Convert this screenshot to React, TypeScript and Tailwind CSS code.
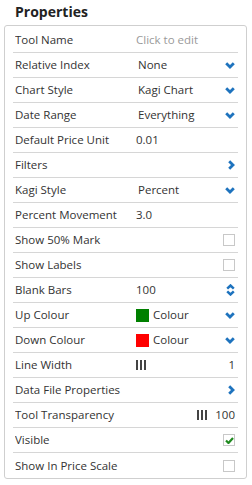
import React from "react";

type Row = {
  label: string;
  kind: "text" | "select" | "link" | "check" | "spin" | "colour" | "bars" | "barsRight";
  value?: string;
  muted?: boolean;
  checked?: boolean;
  swatch?: string;
};

const rows: Row[] = [
  { label: "Tool Name", kind: "text", value: "Click to edit", muted: true },
  { label: "Relative Index", kind: "select", value: "None" },
  { label: "Chart Style", kind: "select", value: "Kagi Chart" },
  { label: "Date Range", kind: "select", value: "Everything" },
  { label: "Default Price Unit", kind: "text", value: "0.01" },
  { label: "Filters", kind: "link" },
  { label: "Kagi Style", kind: "select", value: "Percent" },
  { label: "Percent Movement", kind: "text", value: "3.0" },
  { label: "Show 50% Mark", kind: "check" },
  { label: "Show Labels", kind: "check" },
  { label: "Blank Bars", kind: "spin", value: "100" },
  { label: "Up Colour", kind: "colour", value: "Colour", swatch: "bg-[#008000]" },
  { label: "Down Colour", kind: "colour", value: "Colour", swatch: "bg-[#ff0000]" },
  { label: "Line Width", kind: "bars", value: "1" },
  { label: "Data File Properties", kind: "link" },
  { label: "Tool Transparency", kind: "barsRight", value: "100" },
  { label: "Visible", kind: "check", checked: true },
  { label: "Show In Price Scale", kind: "check" },
];

function ChevronDown() {
  return (
    <svg width="10" height="7" viewBox="0 0 10 7" className="shrink-0">
      <path d="M1.2 1.2 L5 5 L8.8 1.2" fill="none" stroke="#1e73be" strokeWidth="2.8" />
    </svg>
  );
}

function ChevronRight() {
  return (
    <svg width="7" height="10" viewBox="0 0 7 10" className="shrink-0">
      <path d="M1.2 1.2 L5 5 L1.2 8.8" fill="none" stroke="#1e73be" strokeWidth="2.8" />
    </svg>
  );
}

function UpDown() {
  return (
    <svg width="9" height="12" viewBox="0 0 9 12" className="shrink-0">
      <path d="M1.2 4.6 L4.5 1.5 L7.8 4.6" fill="none" stroke="#1e73be" strokeWidth="2.5" />
      <path d="M1.2 7.4 L4.5 10.5 L7.8 7.4" fill="none" stroke="#1e73be" strokeWidth="2.5" />
    </svg>
  );
}

function Bars() {
  return (
    <div className="flex gap-[2px] h-[10px]">
      <div className="w-[2px] bg-[#444]" />
      <div className="w-[2px] bg-[#444]" />
      <div className="w-[2px] bg-[#444]" />
    </div>
  );
}

function CheckBox({ checked }: { checked?: boolean }) {
  return (
    <div className="w-[12px] h-[12px] border border-[#c8c8c8] bg-white flex items-center justify-center">
      {checked && (
        <svg width="9" height="7" viewBox="0 0 9 7">
          <path d="M1 3.5 L3.5 6 L8 1" fill="none" stroke="#1f8a1f" strokeWidth="2.2" />
        </svg>
      )}
    </div>
  );
}

function RowView({ row, last }: { row: Row; last: boolean }) {
  let value: React.ReactNode = null;
  let right: React.ReactNode = null;

  switch (row.kind) {
    case "text":
      value = <span className={row.muted ? "text-[#9a9a9a]" : ""}>{row.value}</span>;
      break;
    case "select":
      value = <span className="pl-[2px]">{row.value}</span>;
      right = <ChevronDown />;
      break;
    case "link":
      right = <ChevronRight />;
      break;
    case "check":
      right = <CheckBox checked={row.checked} />;
      break;
    case "spin":
      value = <span>{row.value}</span>;
      right = <UpDown />;
      break;
    case "colour":
      value = (
        <span className="flex items-center gap-[4px]">
          <span className={`w-[13px] h-[13px] ${row.swatch}`} />
          {row.value}
        </span>
      );
      right = <ChevronDown />;
      break;
    case "bars":
      value = <Bars />;
      right = <span>{row.value}</span>;
      break;
    case "barsRight":
      right = (
        <span className="flex items-center gap-[8px]">
          <Bars />
          {row.value}
        </span>
      );
      break;
  }

  return (
    <div
      className={`flex items-center h-[25px] pl-[2px] pr-[3px] ${last ? "" : "border-b border-[#d6d6d6]"}`}
    >
      <div className="w-[121px] shrink-0 truncate">{row.label}</div>
      <div className="flex-1 flex items-center">{value}</div>
      <div className="flex items-center">{right}</div>
    </div>
  );
}

export default function App() {
  return (
    <div className="w-[252px] h-[485px] bg-white text-[#333] font-['Open_Sans',sans-serif] text-[11.5px]">
      <div className="h-[25px] flex items-center pl-[15px] pb-[3px] text-[14px] font-bold text-[#222]">
        Properties
      </div>
      <div className="mx-[4px] w-[243px] border border-[#cfcfcf] rounded-[3px] pt-[2px] px-[8px]">
        {rows.map((r, i) => (
          <RowView key={r.label} row={r} last={i === rows.length - 1} />
        ))}
      </div>
    </div>
  );
}
